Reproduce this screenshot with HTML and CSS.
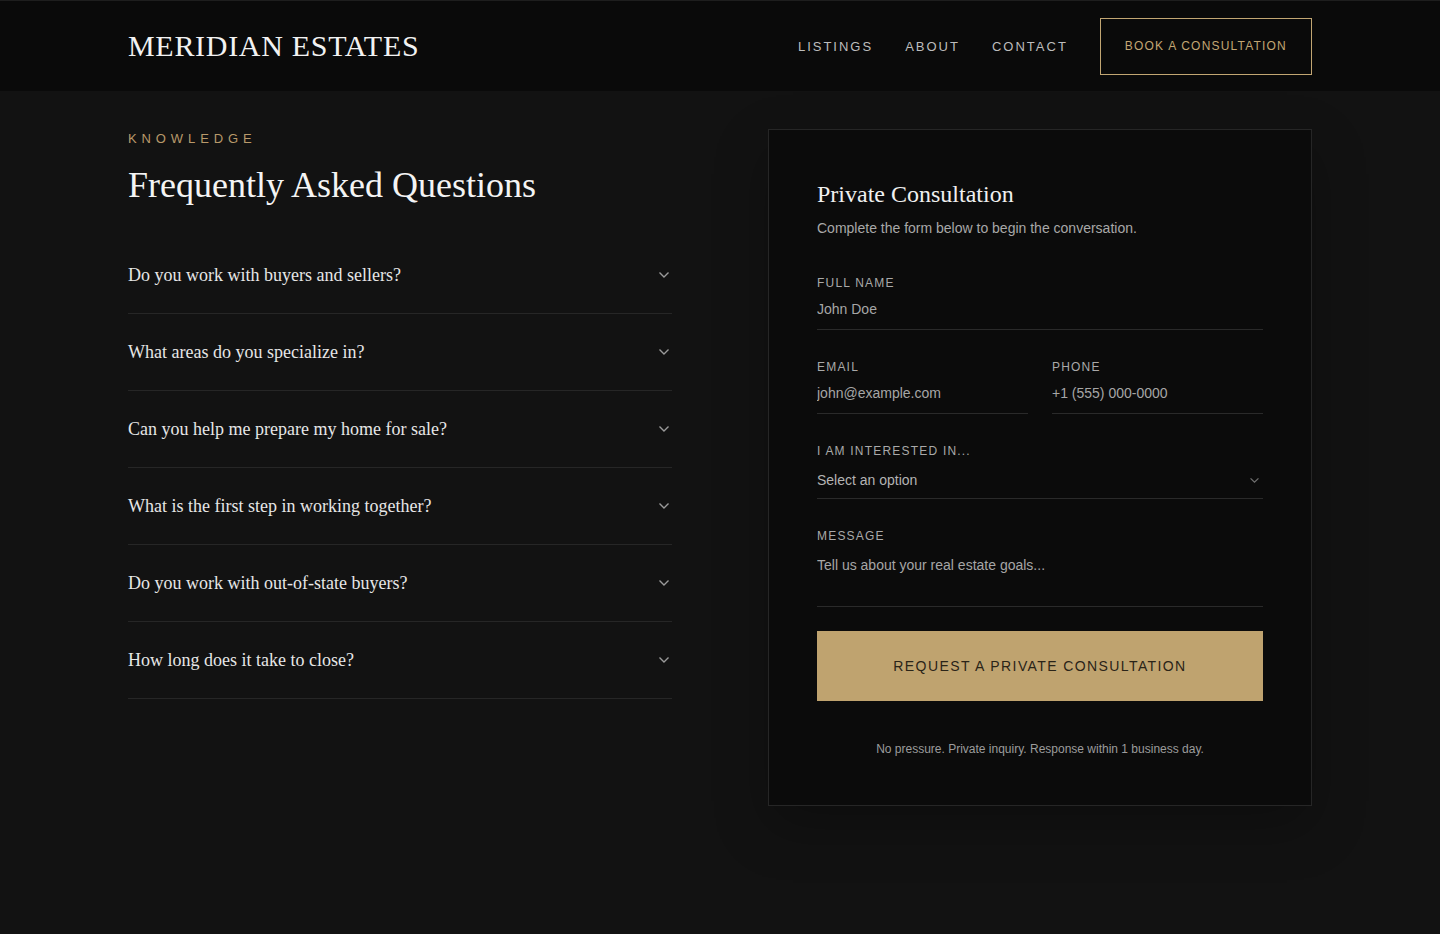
FILE: index.html
```html
<!DOCTYPE html>
<html lang="en">
<head>
    <meta charset="UTF-8">
    <meta name="viewport" content="width=device-width, initial-scale=1.0">
    <title>Meridian Estates — FAQ &amp; Consultation</title>
    <link rel="stylesheet" href="styles.css">
</head>
<body>
    <header class="site-header">
        <div class="header-inner">
            <a class="logo" href="#">MERIDIAN ESTATES</a>
            <nav class="nav">
                <a href="#">LISTINGS</a>
                <a href="#">ABOUT</a>
                <a href="#">CONTACT</a>
                <a class="nav-cta" href="#">BOOK A CONSULTATION</a>
            </nav>
        </div>
    </header>

    <main class="main">
        <section class="faq">
            <p class="eyebrow">KNOWLEDGE</p>
            <h2 class="faq-title">Frequently Asked Questions</h2>
            <ul class="faq-list">
                <li class="faq-item"><span>Do you work with buyers and sellers?</span><svg class="chev" viewBox="0 0 12 8"><path d="M1.5 1.5L6 6l4.5-4.5"/></svg></li>
                <li class="faq-item"><span>What areas do you specialize in?</span><svg class="chev" viewBox="0 0 12 8"><path d="M1.5 1.5L6 6l4.5-4.5"/></svg></li>
                <li class="faq-item"><span>Can you help me prepare my home for sale?</span><svg class="chev" viewBox="0 0 12 8"><path d="M1.5 1.5L6 6l4.5-4.5"/></svg></li>
                <li class="faq-item"><span>What is the first step in working together?</span><svg class="chev" viewBox="0 0 12 8"><path d="M1.5 1.5L6 6l4.5-4.5"/></svg></li>
                <li class="faq-item"><span>Do you work with out-of-state buyers?</span><svg class="chev" viewBox="0 0 12 8"><path d="M1.5 1.5L6 6l4.5-4.5"/></svg></li>
                <li class="faq-item"><span>How long does it take to close?</span><svg class="chev" viewBox="0 0 12 8"><path d="M1.5 1.5L6 6l4.5-4.5"/></svg></li>
            </ul>
        </section>

        <section class="card">
            <h3 class="card-title">Private Consultation</h3>
            <p class="card-sub">Complete the form below to begin the conversation.</p>
            <form class="form" onsubmit="return false">
                <label class="field">
                    <span class="label">FULL NAME</span>
                    <input type="text" placeholder="John Doe">
                </label>
                <div class="row">
                    <label class="field">
                        <span class="label">EMAIL</span>
                        <input type="email" placeholder="john@example.com">
                    </label>
                    <label class="field">
                        <span class="label">PHONE</span>
                        <input type="tel" placeholder="+1 (555) 000-0000">
                    </label>
                </div>
                <label class="field">
                    <span class="label">I AM INTERESTED IN...</span>
                    <div class="select-wrap">
                        <select>
                            <option>Select an option</option>
                            <option>Buying</option>
                            <option>Selling</option>
                        </select>
                        <svg class="chev select-chev" viewBox="0 0 12 8"><path d="M1.5 1.5L6 6l4.5-4.5"/></svg>
                    </div>
                </label>
                <label class="field field-last">
                    <span class="label">MESSAGE</span>
                    <textarea rows="2" placeholder="Tell us about your real estate goals..."></textarea>
                </label>
                <button class="submit" type="submit">REQUEST A PRIVATE CONSULTATION</button>
                <p class="note">No pressure. Private inquiry. Response within 1 business day.</p>
            </form>
        </section>
    </main>
</body>
</html>
```

FILE: styles.css
```css
* {
    box-sizing: border-box;
}
body {
    margin: 0;
    background-color: #121212;
    color: #e8e8e8;
    font-family: 'Liberation Sans', Arial, sans-serif;
    min-height: 100vh;
}
a {
    text-decoration: none;
    color: inherit;
}

/* header */
.site-header {
    background-color: #0a0a0a;
    border-top: 1px solid #1e1e1e;
}
.header-inner {
    width: 1184px;
    margin: 0 auto;
    height: 90px;
    display: flex;
    justify-content: space-between;
    align-items: center;
}
.logo {
    font-family: 'Liberation Serif', 'Times New Roman', serif;
    font-size: 30px;
    letter-spacing: 0.7px;
    color: #f2f2f2;
}
.nav {
    display: flex;
    align-items: center;
    gap: 32px;
}
.nav a {
    font-size: 13px;
    letter-spacing: 2px;
    color: #bdbdbd;
}
.nav .nav-cta {
    border: 1px solid #c2a673;
    color: #c2a673;
    font-size: 12px;
    letter-spacing: 1.2px;
    padding: 20px 24px 21px;
}

/* layout */
.main {
    width: 1184px;
    margin: 0 auto;
    padding-top: 38px;
    display: flex;
    gap: 96px;
    align-items: flex-start;
}
.faq {
    width: 544px;
}
.eyebrow {
    margin: 0;
    font-size: 13px;
    line-height: 16px;
    letter-spacing: 4.9px;
    color: #b8996a;
    padding-top: 2px;
}
.faq-title {
    margin: 16px 0 0;
    font-family: 'Liberation Serif', 'Times New Roman', serif;
    font-weight: normal;
    font-size: 36px;
    line-height: 44px;
    color: #f4f4f4;
}
.faq-list {
    list-style: none;
    margin: 30px 0 0;
    padding: 0;
}
.faq-item {
    display: flex;
    justify-content: space-between;
    align-items: center;
    height: 77px;
    padding: 0 2px 0 0;
    border-bottom: 1px solid #262626;
    font-family: 'Liberation Serif', 'Times New Roman', serif;
    font-size: 18px;
    color: #e6e6e6;
}
.chev {
    width: 12px;
    height: 8px;
    fill: none;
    stroke: #9a9a9a;
    stroke-width: 1.4;
}

/* consultation card */
.card {
    width: 544px;
    background-color: #0b0b0b;
    border: 1px solid #262626;
    padding: 48px;
    box-shadow: 0 20px 50px rgba(0, 0, 0, 0.25);
}
.card-title {
    margin: 0;
    font-family: 'Liberation Serif', 'Times New Roman', serif;
    font-weight: normal;
    font-size: 24px;
    line-height: 32px;
    color: #f0f0f0;
}
.card-sub {
    margin: 9px 0 0;
    font-size: 14px;
    line-height: 18px;
    color: #a8a8a8;
}
.form {
    margin-top: 38px;
}
.field {
    display: block;
    margin-bottom: 29px;
}
.field-last {
    margin-bottom: 24px;
}
.label {
    display: block;
    font-size: 12px;
    line-height: 16px;
    letter-spacing: 1.2px;
    color: #a9a9a9;
    margin-bottom: 8px;
}
.field input,
.field select,
.field textarea {
    display: block;
    width: 100%;
    background: transparent;
    border: none;
    border-bottom: 1px solid #2a2a2a;
    border-radius: 0;
    font-family: 'Liberation Sans', Arial, sans-serif;
    font-size: 14px;
    line-height: 20px;
    color: #d0d0d0;
    padding: 0 0 10px;
    outline: none;
    -webkit-appearance: none;
    appearance: none;
}
.field input::placeholder,
.field textarea::placeholder {
    color: #a6a6a6;
}
.row {
    display: grid;
    grid-template-columns: 1fr 1fr;
    gap: 24px;
}
.select-wrap {
    position: relative;
}
.field select {
    color: #b4b4b4;
    padding: 3px 0 8px;
}
.select-chev {
    position: absolute;
    right: 3px;
    top: 10px;
    width: 11px;
    height: 7px;
    stroke: #707070;
}
.field textarea {
    resize: none;
    padding: 3px 0 0;
    height: 55px;
}
.submit {
    display: block;
    width: 100%;
    height: 70px;
    background-color: #bfa36f;
    border: none;
    color: #2a2418;
    font-family: 'Liberation Sans', Arial, sans-serif;
    font-size: 14px;
    letter-spacing: 1.4px;
    cursor: pointer;
}
.note {
    margin: 40px 0 0;
    text-align: center;
    font-size: 12px;
    line-height: 16px;
    color: #9c9c9c;
}
```
